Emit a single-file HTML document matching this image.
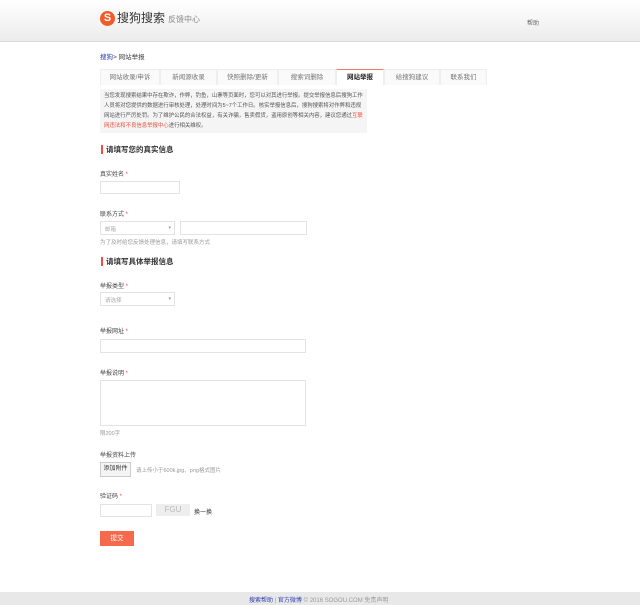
<!DOCTYPE html>
<html><head><meta charset="utf-8"><style>
*{margin:0;padding:0;box-sizing:border-box}
body{width:640px;height:605px;background:#fff;font-family:"Liberation Sans","Noto Sans CJK SC",sans-serif;position:relative;overflow:hidden;color:#333}
.a{position:absolute;white-space:nowrap}
.hd{position:absolute;left:0;top:0;width:640px;height:42px;background:linear-gradient(#fff,#ececec);border-bottom:1px solid #ddd}
.t{font-size:6px;color:#444}
.s{color:#f04e3a}
.in{position:absolute;border:1px solid #e3e3e3;background:#fff}
.sel{position:absolute;border:1px solid #e3e3e3;background:#fff;font-size:5.5px;color:#aaa;padding:3px 4px}
.sel:after{content:"▾";position:absolute;right:3px;top:3px;font-size:5px;color:#999}
.h{font-size:7.5px;font-weight:bold;color:#333;border-left:2px solid #f04e3a;padding-left:3px;line-height:9px}
.tabs{position:absolute;left:100px;top:69px;height:16px;display:flex;border-bottom:1px solid #eee}
.tab{font-size:6.5px;color:#777;border:1px solid #eee;border-bottom:none;background:#fafafa;height:16px;line-height:15px;text-align:center}
.tab.on{background:#fff;border-top:1px solid #f07a6a;color:#222;font-weight:bold}
</style></head><body>
<div class="hd"></div>
<div class="a" style="left:100px;top:11px;width:15px;height:15px;border-radius:50%;background:#f15a29;color:#fff;font-size:11px;font-weight:bold;text-align:center;line-height:15px">S</div>
<div class="a" style="left:117px;top:10px;font-size:12px;color:#333;line-height:17px">搜狗搜索</div>
<div class="a" style="left:168px;top:14px;font-size:8px;color:#888">反馈中心</div>
<div class="a" style="left:527px;top:18px;font-size:6px;color:#666">帮助</div>
<div class="a" style="left:100px;top:51px;font-size:6.5px;color:#444"><span style="color:#2a3bb0">搜狗</span>&gt; 网站举报</div>
<div class="tabs">
<div class="tab" style="width:60px">网站收录/申诉</div>
<div class="tab" style="width:57px">新闻源收录</div>
<div class="tab" style="width:61px">快照删除/更新</div>
<div class="tab" style="width:58px">搜索词删除</div>
<div class="tab on" style="width:48px">网站举报</div>
<div class="tab" style="width:56px">给搜狗建议</div>
<div class="tab" style="width:47px">联系我们</div>
</div>
<div class="a" style="left:100px;top:89px;width:267px;height:44px;background:#f5f5f5;font-size:5.4px;line-height:10px;color:#555;padding:2px 4px;white-space:normal">当您发现搜索结果中存在欺诈，作弊，钓鱼，山寨等页面时，您可以对其进行举报。提交举报信息后搜狗工作人员将对您提供的数据进行审核处理，处理时间为5~7个工作日。核实举报信息后，搜狗搜索将对作弊和违规网站进行严厉处罚。为了维护公民的合法权益，有关诈骗，售卖假货，盗用原创等相关内容，建议您通过<span class="s">互联网违法和不良信息举报中心</span>进行相关维权。</div>
<div class="a h" style="left:101px;top:145px">请填写您的真实信息</div>
<div class="a t" style="left:100px;top:169px">真实姓名 <span class="s">*</span></div>
<div class="in" style="left:100px;top:181px;width:80px;height:13px"></div>
<div class="a t" style="left:100px;top:209px">联系方式 <span class="s">*</span></div>
<div class="sel" style="left:100px;top:221px;width:75px;height:14px">邮箱</div>
<div class="in" style="left:180px;top:221px;width:127px;height:14px"></div>
<div class="a" style="left:100px;top:238px;font-size:5.5px;color:#999">为了及时给您反馈处理信息，请填写联系方式</div>
<div class="a h" style="left:101px;top:257px">请填写具体举报信息</div>
<div class="a t" style="left:100px;top:281px">举报类型 <span class="s">*</span></div>
<div class="sel" style="left:100px;top:292px;width:75px;height:14px">请选择</div>
<div class="a t" style="left:100px;top:326px">举报网址 <span class="s">*</span></div>
<div class="in" style="left:100px;top:339px;width:206px;height:14px"></div>
<div class="a t" style="left:100px;top:368px">举报说明 <span class="s">*</span></div>
<div class="in" style="left:100px;top:380px;width:206px;height:46px"></div>
<div class="a" style="left:100px;top:429px;font-size:5.5px;color:#999">限200字</div>
<div class="a t" style="left:100px;top:450px">举报资料上传</div>
<div class="a" style="left:100px;top:462px;width:31px;height:15px;border:1px solid #ccc;background:#f5f5f5;font-size:6px;line-height:13px;text-align:center;color:#333">添加附件</div>
<div class="a" style="left:136px;top:466px;font-size:5.5px;color:#999">请上传小于600k.jpg、png格式图片</div>
<div class="a t" style="left:100px;top:491px">验证码 <span class="s">*</span></div>
<div class="in" style="left:100px;top:504px;width:52px;height:13px"></div>
<div class="a" style="left:156px;top:504px;width:34px;height:12px;background:#eee;color:#bbb;font-size:8px;line-height:12px;text-align:center">FGU</div>
<div class="a" style="left:194px;top:507px;font-size:6px;color:#333">换一换</div>
<div class="a" style="left:100px;top:531px;width:34px;height:15px;background:#f56a4c;color:#fff;font-size:6.5px;line-height:15px;text-align:center">提交</div>
<div class="a" style="left:0;top:592px;width:640px;height:13px;background:#e8e8e8"></div>
<div class="a" style="left:249px;top:595px;font-size:6px;color:#999"><span style="color:#2a3bb0">搜索帮助</span> | <span style="color:#2a3bb0">官方微博</span> © 2016 SOGOU.COM 免责声明</div>
</body></html>
